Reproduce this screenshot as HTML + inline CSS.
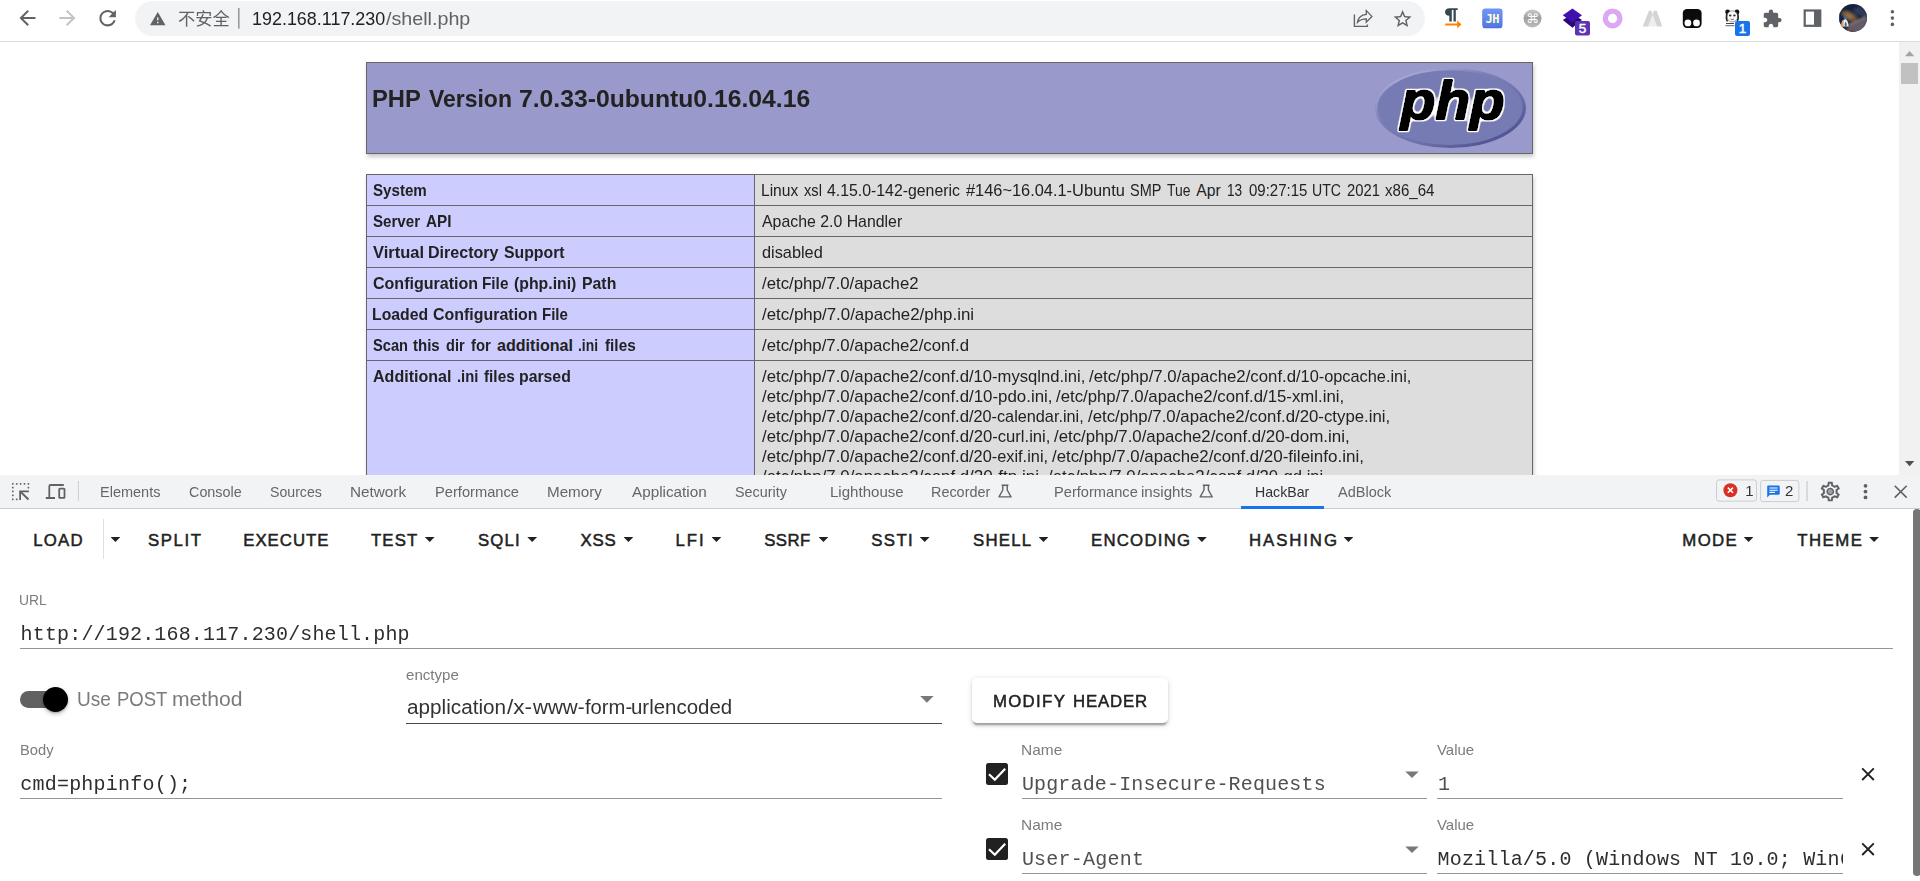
<!DOCTYPE html>
<html lang="zh-CN">
<head>
<meta charset="utf-8">
<title>phpinfo()</title>
<style>
html,body{margin:0;padding:0;}
html{overflow:hidden;}
body{width:1920px;height:881px;overflow:hidden;position:relative;background:#fff;font-family:"Liberation Sans","Noto Sans CJK SC",sans-serif;}
.t{position:absolute;white-space:pre;margin:0;padding:0;transform-origin:0 0;}
.abs{position:absolute;}
.gl{will-change:transform;}
#page{position:absolute;left:0;top:0;width:1899px;height:475px;overflow:hidden;background:#fff;}
#top{position:absolute;left:0;top:0;width:1920px;height:41px;background:#fff;border-bottom:1px solid #dadce0;z-index:5;}
#omni{position:absolute;left:135px;top:1px;width:1290px;height:35px;border-radius:18px;background:#f1f3f4;}
#vsb{position:absolute;left:1899px;top:42px;width:21px;height:433px;background:#f1f1f1;}
#dev{position:absolute;left:0;top:475px;width:1920px;height:33px;background:#f1f3f4;border-bottom:1px solid #cacdd1;}
#hb{position:absolute;left:0;top:509px;width:1920px;height:372px;background:#fff;overflow:hidden;}
.cell{position:absolute;box-sizing:border-box;border:1px solid #666;}
.th{background:#ccf;}
.td{background:#ddd;}
.ul{position:absolute;height:1px;background:#949494;}
.caret{position:absolute;width:9.8px;height:4.9px;background:#212121;clip-path:polygon(0 0,100% 0,50% 100%);}
.sel{position:absolute;width:13.4px;height:6.6px;background:#787878;clip-path:polygon(0 0,100% 0,50% 100%);}
.cb{position:absolute;width:22.4px;height:22.4px;border-radius:2.5px;background:#212121;}
</style>
</head>
<body>

<!-- ================= PHP page ================= -->
<div id="page">
  <div class="abs" style="left:366px;top:62px;width:1167px;height:92px;box-sizing:border-box;border:1px solid #666;background:#99c;box-shadow:1.25px 2.5px 3.75px #ccc;"></div>
  <svg class="abs" style="left:1365px;top:62px;" width="170" height="92" viewBox="1365 62 170 92">
    <defs>
      <linearGradient id="pg" x1="0.15" y1="0.1" x2="0.85" y2="0.9">
        <stop offset="0" stop-color="#a9abd6"/><stop offset="0.35" stop-color="#7a7eb6"/><stop offset="0.65" stop-color="#6f73ad"/><stop offset="1" stop-color="#4f5293"/>
      </linearGradient>
      <filter id="ol" x="-5%" y="-10%" width="110%" height="120%">
        <feMorphology in="SourceAlpha" operator="dilate" radius="2" result="d"/>
        <feGaussianBlur in="d" stdDeviation="0.8" result="db"/>
        <feComponentTransfer in="db" result="dt"><feFuncA type="linear" slope="3" intercept="-1.75"/></feComponentTransfer>
        <feFlood flood-color="#fff" result="w"/>
        <feComposite in="w" in2="dt" operator="in" result="o"/>
        <feMerge><feMergeNode in="o"/><feMergeNode in="SourceGraphic"/></feMerge>
      </filter>
    </defs>
    <ellipse cx="1450.5" cy="108" rx="75.5" ry="40" fill="url(#pg)"/>
    <ellipse cx="1450" cy="107.6" rx="72.5" ry="37.4" fill="#777bb3"/>
    <text x="1400.8" y="119.3" textLength="104" lengthAdjust="spacingAndGlyphs" font-family="'Liberation Sans', sans-serif" font-weight="700" font-style="italic" font-size="54" fill="#000" stroke="#000" stroke-width="1.9" stroke-linejoin="round" filter="url(#ol)">php</text>
  </svg>
  <!-- table cells -->
  <div id="tbl" class="abs" style="left:366px;top:174px;width:1167px;height:340px;box-shadow:1.25px 2.5px 3.75px #ccc;"></div>
  <div class="cell th" style="left:366px;top:174px;width:389px;height:32px;"></div><div class="cell td" style="left:754px;top:174px;width:779px;height:32px;"></div>
<div class="cell th" style="left:366px;top:205px;width:389px;height:32px;"></div><div class="cell td" style="left:754px;top:205px;width:779px;height:32px;"></div>
<div class="cell th" style="left:366px;top:236px;width:389px;height:32px;"></div><div class="cell td" style="left:754px;top:236px;width:779px;height:32px;"></div>
<div class="cell th" style="left:366px;top:267px;width:389px;height:32px;"></div><div class="cell td" style="left:754px;top:267px;width:779px;height:32px;"></div>
<div class="cell th" style="left:366px;top:298px;width:389px;height:32px;"></div><div class="cell td" style="left:754px;top:298px;width:779px;height:32px;"></div>
<div class="cell th" style="left:366px;top:329px;width:389px;height:32px;"></div><div class="cell td" style="left:754px;top:329px;width:779px;height:32px;"></div>
<div class="cell th" style="left:366px;top:360px;width:389px;height:181px;"></div><div class="cell td" style="left:754px;top:360px;width:779px;height:181px;"></div>
<span class="t" style="left:372.28px;top:82.50px;font:normal 700 24.5px/32px 'Liberation Sans', sans-serif;color:#222;transform:scaleX(0.9687);">PHP </span><span class="t" style="left:429.25px;top:82.50px;font:normal 700 24.5px/32px 'Liberation Sans', sans-serif;color:#222;transform:scaleX(0.9366);">Version </span><span class="t" style="left:518.99px;top:82.50px;font:normal 700 24.5px/32px 'Liberation Sans', sans-serif;color:#222;transform:scaleX(1.0085);">7.0.33-0ubuntu0.16.04.16</span>
<span class="t" style="left:373.25px;top:179.50px;font:normal 700 16.1px/21px 'Liberation Sans', sans-serif;color:#222;transform:scaleX(0.9395);">System</span>
<span class="t" style="left:373.25px;top:210.50px;font:normal 700 16.1px/21px 'Liberation Sans', sans-serif;color:#222;transform:scaleX(0.9391);">Server </span><span class="t" style="left:426.25px;top:210.50px;font:normal 700 16.1px/21px 'Liberation Sans', sans-serif;color:#222;transform:scaleX(0.9485);">API</span>
<span class="t" style="left:373.25px;top:241.50px;font:normal 700 16.1px/21px 'Liberation Sans', sans-serif;color:#222;transform:scaleX(1.0240);">Virtual </span><span class="t" style="left:428.25px;top:241.50px;font:normal 700 16.1px/21px 'Liberation Sans', sans-serif;color:#222;transform:scaleX(0.9970);">Directory </span><span class="t" style="left:503.80px;top:241.50px;font:normal 700 16.1px/21px 'Liberation Sans', sans-serif;color:#222;transform:scaleX(0.9820);">Support</span>
<span class="t" style="left:373.25px;top:272.50px;font:normal 700 16.1px/21px 'Liberation Sans', sans-serif;color:#222;transform:scaleX(0.9962);">Configuration </span><span class="t" style="left:482.30px;top:272.50px;font:normal 700 16.1px/21px 'Liberation Sans', sans-serif;color:#222;transform:scaleX(0.9524);">File </span><span class="t" style="left:514.25px;top:272.50px;font:normal 700 16.1px/21px 'Liberation Sans', sans-serif;color:#222;transform:scaleX(0.9826);">(php.ini) </span><span class="t" style="left:581.52px;top:272.50px;font:normal 700 16.1px/21px 'Liberation Sans', sans-serif;color:#222;transform:scaleX(0.9835);">Path</span>
<span class="t" style="left:372.27px;top:303.50px;font:normal 700 16.1px/21px 'Liberation Sans', sans-serif;color:#222;transform:scaleX(0.9794);">Loaded </span><span class="t" style="left:433.25px;top:303.50px;font:normal 700 16.1px/21px 'Liberation Sans', sans-serif;color:#222;transform:scaleX(0.9914);">Configuration </span><span class="t" style="left:542.07px;top:303.50px;font:normal 700 16.1px/21px 'Liberation Sans', sans-serif;color:#222;transform:scaleX(0.9338);">File</span>
<span class="t" style="left:373.25px;top:334.50px;font:normal 700 16.1px/21px 'Liberation Sans', sans-serif;color:#222;transform:scaleX(0.9100);">Scan </span><span class="t" style="left:413.25px;top:334.50px;font:normal 700 16.1px/21px 'Liberation Sans', sans-serif;color:#222;transform:scaleX(0.9333);">this </span><span class="t" style="left:445.75px;top:334.50px;font:normal 700 16.1px/21px 'Liberation Sans', sans-serif;color:#222;transform:scaleX(0.9037);">dir </span><span class="t" style="left:470.75px;top:334.50px;font:normal 700 16.1px/21px 'Liberation Sans', sans-serif;color:#222;transform:scaleX(0.9238);">for </span><span class="t" style="left:497.00px;top:334.50px;font:normal 700 16.1px/21px 'Liberation Sans', sans-serif;color:#222;">additional </span><span class="t" style="left:577.89px;top:334.50px;font:normal 700 16.1px/21px 'Liberation Sans', sans-serif;color:#222;transform:scaleX(0.8611);">.ini </span><span class="t" style="left:605.00px;top:334.50px;font:normal 700 16.1px/21px 'Liberation Sans', sans-serif;color:#222;transform:scaleX(0.9534);">files</span>
<span class="t" style="left:373.25px;top:365.50px;font:normal 700 16.1px/21px 'Liberation Sans', sans-serif;color:#222;transform:scaleX(0.9975);">Additional </span><span class="t" style="left:456.58px;top:365.50px;font:normal 700 16.1px/21px 'Liberation Sans', sans-serif;color:#222;transform:scaleX(0.9186);">.ini </span><span class="t" style="left:484.25px;top:365.50px;font:normal 700 16.1px/21px 'Liberation Sans', sans-serif;color:#222;transform:scaleX(0.9534);">files </span><span class="t" style="left:519.02px;top:365.50px;font:normal 700 16.1px/21px 'Liberation Sans', sans-serif;color:#222;transform:scaleX(0.9814);">parsed</span>
<span class="t" style="left:761.11px;top:180.00px;font:normal 400 15.7px/21px 'Liberation Sans', sans-serif;color:#222;transform:scaleX(0.9929);">Linux </span><span class="t" style="left:804.10px;top:180.00px;font:normal 400 15.7px/21px 'Liberation Sans', sans-serif;color:#222;transform:scaleX(0.9365);">xsl </span><span class="t" style="left:827.20px;top:180.00px;font:normal 400 15.7px/21px 'Liberation Sans', sans-serif;color:#222;transform:scaleX(1.0095);">4.15.0-142-generic </span><span class="t" style="left:965.90px;top:180.00px;font:normal 400 15.7px/21px 'Liberation Sans', sans-serif;color:#222;transform:scaleX(1.0437);">#146~16.04.1-Ubuntu </span><span class="t" style="left:1130.00px;top:180.00px;font:normal 400 15.7px/21px 'Liberation Sans', sans-serif;color:#222;transform:scaleX(0.9215);">SMP </span><span class="t" style="left:1166.90px;top:180.00px;font:normal 400 15.7px/21px 'Liberation Sans', sans-serif;color:#222;transform:scaleX(0.8868);">Tue </span><span class="t" style="left:1196.20px;top:180.00px;font:normal 400 15.7px/21px 'Liberation Sans', sans-serif;color:#222;">Apr </span><span class="t" style="left:1226.63px;top:180.00px;font:normal 400 15.7px/21px 'Liberation Sans', sans-serif;color:#222;transform:scaleX(0.8730);">13 </span><span class="t" style="left:1248.50px;top:180.00px;font:normal 400 15.7px/21px 'Liberation Sans', sans-serif;color:#222;transform:scaleX(0.9570);">09:27:15 </span><span class="t" style="left:1312.30px;top:180.00px;font:normal 400 15.7px/21px 'Liberation Sans', sans-serif;color:#222;transform:scaleX(0.8993);">UTC </span><span class="t" style="left:1346.60px;top:180.00px;font:normal 400 15.7px/21px 'Liberation Sans', sans-serif;color:#222;transform:scaleX(0.9422);">2021 </span><span class="t" style="left:1385.00px;top:180.00px;font:normal 400 15.7px/21px 'Liberation Sans', sans-serif;color:#222;transform:scaleX(0.9605);">x86_64</span>
<span class="t" style="left:761.75px;top:211.00px;font:normal 400 15.7px/21px 'Liberation Sans', sans-serif;color:#222;transform:scaleX(1.0112);">Apache 2.0 Handler</span>
<span class="t" style="left:761.75px;top:242.00px;font:normal 400 15.7px/21px 'Liberation Sans', sans-serif;color:#222;transform:scaleX(1.0396);">disabled</span>
<span class="t" style="left:761.75px;top:273.00px;font:normal 400 15.7px/21px 'Liberation Sans', sans-serif;color:#222;transform:scaleX(1.0682);">/etc/php/7.0/apache2</span>
<span class="t" style="left:761.75px;top:304.00px;font:normal 400 15.7px/21px 'Liberation Sans', sans-serif;color:#222;transform:scaleX(1.0756);">/etc/php/7.0/apache2/php.ini</span>
<span class="t" style="left:761.75px;top:335.00px;font:normal 400 15.7px/21px 'Liberation Sans', sans-serif;color:#222;transform:scaleX(1.0692);">/etc/php/7.0/apache2/conf.d</span>
<span class="t" style="left:761.75px;top:366.00px;font:normal 400 15.7px/21px 'Liberation Sans', sans-serif;color:#222;transform:scaleX(1.0692);">/etc/php/7.0/apache2/conf.d</span><span class="t" style="left:968.60px;top:366.00px;font:normal 400 15.7px/21px 'Liberation Sans', sans-serif;color:#222;transform:scaleX(1.0581);">/10-mysqlnd.ini, </span><span class="t" style="left:1089.20px;top:366.00px;font:normal 400 15.7px/21px 'Liberation Sans', sans-serif;color:#222;transform:scaleX(1.0692);">/etc/php/7.0/apache2/conf.d</span><span class="t" style="left:1296.05px;top:366.00px;font:normal 400 15.7px/21px 'Liberation Sans', sans-serif;color:#222;transform:scaleX(1.0416);">/10-opcache.ini, </span><span class="t" style="left:761.75px;top:386.00px;font:normal 400 15.7px/21px 'Liberation Sans', sans-serif;color:#222;transform:scaleX(1.0692);">/etc/php/7.0/apache2/conf.d</span><span class="t" style="left:968.60px;top:386.00px;font:normal 400 15.7px/21px 'Liberation Sans', sans-serif;color:#222;transform:scaleX(1.0753);">/10-pdo.ini, </span><span class="t" style="left:1056.40px;top:386.00px;font:normal 400 15.7px/21px 'Liberation Sans', sans-serif;color:#222;transform:scaleX(1.0692);">/etc/php/7.0/apache2/conf.d</span><span class="t" style="left:1263.25px;top:386.00px;font:normal 400 15.7px/21px 'Liberation Sans', sans-serif;color:#222;transform:scaleX(1.0694);">/15-xml.ini, </span><span class="t" style="left:761.75px;top:406.00px;font:normal 400 15.7px/21px 'Liberation Sans', sans-serif;color:#222;transform:scaleX(1.0692);">/etc/php/7.0/apache2/conf.d</span><span class="t" style="left:968.60px;top:406.00px;font:normal 400 15.7px/21px 'Liberation Sans', sans-serif;color:#222;transform:scaleX(1.0357);">/20-calendar.ini, </span><span class="t" style="left:1087.70px;top:406.00px;font:normal 400 15.7px/21px 'Liberation Sans', sans-serif;color:#222;transform:scaleX(1.0692);">/etc/php/7.0/apache2/conf.d</span><span class="t" style="left:1294.55px;top:406.00px;font:normal 400 15.7px/21px 'Liberation Sans', sans-serif;color:#222;transform:scaleX(1.0704);">/20-ctype.ini, </span><span class="t" style="left:761.75px;top:426.00px;font:normal 400 15.7px/21px 'Liberation Sans', sans-serif;color:#222;transform:scaleX(1.0692);">/etc/php/7.0/apache2/conf.d</span><span class="t" style="left:968.60px;top:426.00px;font:normal 400 15.7px/21px 'Liberation Sans', sans-serif;color:#222;transform:scaleX(1.0615);">/20-curl.ini, </span><span class="t" style="left:1054.40px;top:426.00px;font:normal 400 15.7px/21px 'Liberation Sans', sans-serif;color:#222;transform:scaleX(1.0692);">/etc/php/7.0/apache2/conf.d</span><span class="t" style="left:1261.25px;top:426.00px;font:normal 400 15.7px/21px 'Liberation Sans', sans-serif;color:#222;transform:scaleX(1.0825);">/20-dom.ini, </span><span class="t" style="left:761.75px;top:446.00px;font:normal 400 15.7px/21px 'Liberation Sans', sans-serif;color:#222;transform:scaleX(1.0692);">/etc/php/7.0/apache2/conf.d</span><span class="t" style="left:968.60px;top:446.00px;font:normal 400 15.7px/21px 'Liberation Sans', sans-serif;color:#222;transform:scaleX(1.0423);">/20-exif.ini, </span><span class="t" style="left:1052.20px;top:446.00px;font:normal 400 15.7px/21px 'Liberation Sans', sans-serif;color:#222;transform:scaleX(1.0692);">/etc/php/7.0/apache2/conf.d</span><span class="t" style="left:1259.05px;top:446.00px;font:normal 400 15.7px/21px 'Liberation Sans', sans-serif;color:#222;transform:scaleX(1.0851);">/20-fileinfo.ini, </span><span class="t" style="left:761.75px;top:466.00px;font:normal 400 15.7px/21px 'Liberation Sans', sans-serif;color:#222;transform:scaleX(1.0692);">/etc/php/7.0/apache2/conf.d</span><span class="t" style="left:968.60px;top:466.00px;font:normal 400 15.7px/21px 'Liberation Sans', sans-serif;color:#222;transform:scaleX(1.0855);">/20-ftp.ini, </span><span class="t" style="left:1047.70px;top:466.00px;font:normal 400 15.7px/21px 'Liberation Sans', sans-serif;color:#222;transform:scaleX(1.0692);">/etc/php/7.0/apache2/conf.d</span><span class="t" style="left:1254.55px;top:466.00px;font:normal 400 15.7px/21px 'Liberation Sans', sans-serif;color:#222;transform:scaleX(1.0580);">/20-gd.ini,</span>
</div>
<div id="vsb">
  <svg class="abs" style="left:0;top:0" width="21" height="433" viewBox="0 0 21 433">
    <path d="M6 14.2 L10.6 9 L15.3 14.2 Z" fill="#a3a3a3"/>
    <rect x="2" y="21" width="17" height="21" fill="#c1c1c1"/>
    <path d="M6 419 L15.3 419 L10.6 424.2 Z" fill="#505050"/>
  </svg>
</div>

<!-- ================= Browser toolbar ================= -->
<div id="top">
  <div id="omni"></div>
  <svg class="abs" style="left:0;top:0" width="1920" height="42" viewBox="0 0 1920 42">
  <defs>
    <linearGradient id="jh" x1="0" y1="0" x2="0" y2="1"><stop offset="0" stop-color="#7096f6"/><stop offset="1" stop-color="#4f78e6"/></linearGradient>
    <linearGradient id="cmd" x1="0" y1="0" x2="0" y2="1"><stop offset="0" stop-color="#c9c9c9"/><stop offset="0.5" stop-color="#9e9e9e"/><stop offset="1" stop-color="#bdbdbd"/></linearGradient>
    <radialGradient id="av" cx="0.45" cy="0.62" r="0.6"><stop offset="0" stop-color="#e9b56a"/><stop offset="0.25" stop-color="#a9703c"/><stop offset="0.6" stop-color="#3b3f5a"/><stop offset="1" stop-color="#16223f"/></radialGradient>
    <filter id="avb" x="-20%" y="-20%" width="140%" height="140%"><feGaussianBlur stdDeviation="0.9"/></filter>
    <clipPath id="avc"><circle cx="1853" cy="17.9" r="14"/></clipPath>
    <radialGradient id="avg" cx="0.4" cy="0.5" r="0.6"><stop offset="0" stop-color="#a9803f"/><stop offset="0.5" stop-color="#7e5f3a" stop-opacity="0.85"/><stop offset="1" stop-color="#4a4458" stop-opacity="0"/></radialGradient>
  </defs>
  <!-- nav -->
  <path transform="translate(15.5,6)" d="M20 11H7.83l5.59-5.59L12 4l-8 8 8 8 1.41-1.41L7.83 13H20v-2z" fill="#5f6368"/>
  <path transform="translate(55.4,6)" d="M12 4l-1.41 1.41L16.17 11H4v2h12.17l-5.58 5.59L12 20l8-8z" fill="#c0c4c9"/>
  <path transform="translate(95.3,5.8) scale(1.03)" d="M17.65 6.35C16.2 4.9 14.21 4 12 4c-4.42 0-7.99 3.58-7.99 8s3.57 8 7.99 8c3.73 0 6.84-2.55 7.73-6h-2.08c-.82 2.33-3.04 4-5.65 4-3.31 0-6-2.69-6-6s2.69-6 6-6c1.66 0 3.14.69 4.22 1.78L13 11h7V4l-2.35 2.35z" fill="#5f6368"/>
  <!-- not secure -->
  <path transform="translate(149.3,10.5) scale(0.705)" d="M1 21h22L12 2 1 21zm12-3h-2v-2h2v2zm0-4h-2v-4h2v4z" fill="#5f6368"/>
  <rect x="238.1" y="8" width="1.4" height="20.7" fill="#8a8f94"/>
  <!-- share -->
  <g fill="none" stroke="#5f6368" stroke-width="1.35" stroke-linejoin="miter">
    <path d="M1354.4 14.4 V26.3 H1367.4 V24.4"/>
    <path d="M1357.5 22.3 C1358.2 17.6 1361.4 14.7 1366.3 14.3 V10.6 L1371.9 16.4 L1366.3 22.2 V18.8 C1362.6 18.8 1359.8 19.9 1357.5 22.3 Z"/>
  </g>
  <!-- star -->
  <path transform="translate(1391.8,8.2) scale(0.9)" d="M22 9.24l-7.19-.62L12 2 9.19 8.63 2 9.24l5.46 4.73L5.82 21 12 17.27 18.18 21l-1.63-7.03L22 9.24zM12 15.4l-3.76 2.27 1-4.28-3.32-2.88 4.38-.38L12 6.1l1.71 4.04 4.38.38-3.32 2.88 1 4.28L12 15.4z" fill="#5f6368"/>
  <!-- pilcrow ext -->
  <path d="M1449.6 8.3 H1457.7 V10 H1455.8 V21.6 H1453.5 V10 H1451.8 V21.6 H1449.3 V15.8 C1446.6 15.8 1445 14.2 1445 12 C1445 9.8 1446.8 8.3 1449.6 8.3 Z" fill="#37474f"/>
  <path d="M1445.2 23.5 H1457.2 V20.6 L1461.5 24.4 L1457.2 28.2 V25.4 H1445.2 Z" fill="#ff8000"/>
  <!-- JH -->
  <rect x="1482.5" y="8.7" width="19.8" height="19.6" rx="2.4" fill="#4a64d4"/>
  <rect x="1482.5" y="8.7" width="19.8" height="18.8" rx="2.4" fill="url(#jh)"/>
  <text x="1492.2" y="23.3" text-anchor="middle" font-family="'DejaVu Sans Mono','Liberation Mono',monospace" font-weight="700" font-size="12" fill="#ffffd2" letter-spacing="-0.5">JH</text>
  <!-- cmd -->
  <circle cx="1532.5" cy="18.4" r="9" fill="url(#cmd)"/>
  <text x="1532.5" y="23" text-anchor="middle" font-family="'DejaVu Sans',sans-serif" font-size="13" fill="#fff">⌘</text>
  <!-- purple stack -->
  <path d="M1562.8 20 L1572.4 14 L1582 20 L1572.4 27.8 Z" fill="#2a0a78"/>
  <path d="M1562.8 15.2 L1572.4 8.6 L1582 15.2 L1572.4 22.4 Z" fill="#4310b0"/>
  <rect x="1575" y="21" width="15" height="14.6" rx="2" fill="#5e35b1"/>
  <text x="1582.5" y="33" text-anchor="middle" font-family="'Liberation Sans',sans-serif" font-weight="400" font-size="13.5" fill="#fff" stroke="#fff" stroke-width="0.45">5</text>
  <!-- pink ring -->
  <circle cx="1612.6" cy="18.4" r="7.3" fill="none" stroke="#dca8f4" stroke-width="5.4"/>
  <!-- lambda -->
  <path d="M1648.2 26.6 L1652.7 14.5 L1657 26.6 Z" fill="#eeeeee"/>
  <path d="M1642.7 26.6 L1648.9 10.7 H1651.4 L1652.7 14.5 L1648.2 26.6 Z" fill="#d4d4d4"/>
  <path d="M1652.7 14.5 L1653.9 10.7 H1656.8 L1662.3 26.6 H1657 Z" fill="#d4d4d4"/>
  <!-- tampermonkey -->
  <rect x="1682.8" y="9" width="18.8" height="19" rx="4.2" fill="#0b0b0b"/>
  <circle cx="1687.9" cy="22.9" r="3.4" fill="#fff"/><circle cx="1696.5" cy="22.9" r="3.4" fill="#fff"/>
  <!-- panda -->
  <g>
    <circle cx="1727.6" cy="12" r="2.4" fill="#111"/><circle cx="1737" cy="12" r="2.4" fill="#111"/>
    <ellipse cx="1732.3" cy="16.4" rx="5.4" ry="5.6" fill="#fafafa" stroke="#555" stroke-width="0.6"/>
    <ellipse cx="1730.2" cy="15.4" rx="1.3" ry="1" fill="#333"/><ellipse cx="1734.4" cy="15.4" rx="1.3" ry="1" fill="#333"/>
    <path d="M1730.6 19 Q1732.3 20.2 1734 19" stroke="#333" stroke-width="0.7" fill="none"/>
    <rect x="1726" y="23" width="8" height="1" fill="#444"/><rect x="1725.4" y="25.2" width="9" height="1" fill="#666"/>
    <path d="M1726 13.5 Q1725 18 1726.4 21.6 L1728 21.6 Q1726.6 17.6 1727.4 14 Z" fill="#222"/>
    <path d="M1738.6 13.5 Q1739.6 18 1738.2 21.6 L1736.6 21.6 Q1738 17.6 1737.2 14 Z" fill="#222"/>
  </g>
  <rect x="1735" y="21" width="15" height="15" rx="2" fill="#1a73e8"/>
  <text x="1742.5" y="33.2" text-anchor="middle" font-family="'Liberation Sans',sans-serif" font-weight="400" font-size="13.5" fill="#fff" stroke="#fff" stroke-width="0.45">1</text>
  <!-- puzzle -->
  <path transform="translate(1762.05,8.55) scale(0.85)" d="M20.5 11H19V7c0-1.1-.9-2-2-2h-4V3.5C13 2.12 11.88 1 10.5 1S8 2.12 8 3.5V5H4c-1.1 0-1.99.9-1.99 2v3.8H3.5c1.49 0 2.7 1.21 2.7 2.7s-1.21 2.7-2.7 2.7H2V20c0 1.1.9 2 2 2h3.8v-1.5c0-1.49 1.21-2.7 2.7-2.7 1.49 0 2.7 1.21 2.7 2.7V22H17c1.1 0 2-.9 2-2v-4h1.5c1.38 0 2.5-1.12 2.5-2.5S21.88 11 20.5 11z" fill="#5f6368"/>
  <!-- side panel -->
  <rect x="1804.7" y="10.5" width="15.4" height="15.3" fill="none" stroke="#5f6368" stroke-width="2.2"/>
  <rect x="1814" y="10" width="7.2" height="16.4" fill="#5f6368"/>
  <!-- avatar -->
  <circle cx="1853" cy="17.9" r="14" fill="#13203f"/>
  <g clip-path="url(#avc)">
    <g filter="url(#avb)"><ellipse cx="1851" cy="17" rx="11" ry="5.4" transform="rotate(28 1851 17)" fill="url(#avg)"/>
    <path d="M1853 9 L1860 6.5 L1868 13 L1868 18 L1856 14 Z" fill="#3a4260" opacity="0.8"/>
    <path d="M1846 33 L1849 24 L1866 16 L1868 20 L1868 33 Z" fill="#6b6270" opacity="0.9"/>
    <path d="M1848 24.5 L1865 16.5 L1865.6 17.8 L1848.6 25.8 Z" fill="#9c8468" opacity="0.9"/>
    <path d="M1840 26 Q1846 31 1856 30 L1852 34 L1838 34 Z" fill="#6d4a26" opacity="0.9"/></g>
    <path d="M1841.6 26.6 Q1841.4 20.4 1845.4 19 Q1848.4 20.6 1848.6 26.6 Z" fill="#f4efe6"/>
    <path d="M1841.4 26 Q1841 21 1843.4 19.6 L1843.8 26.4 Z" fill="#e8a35a"/>
    <path d="M1844.6 24 L1845.6 21.6 L1846.8 24 L1846.4 26.4 L1844.8 26.4 Z" fill="#3b6a9a"/>
    <ellipse cx="1845.4" cy="17.8" rx="1.6" ry="1.1" fill="#2f72d2"/>
    <path d="M1839 12 Q1841 17 1840 22 L1838 22 L1838 12 Z" fill="#24508a" opacity="0.7"/>
  </g>
  <!-- menu -->
  <circle cx="1892.4" cy="11.8" r="1.8" fill="#5f6368"/><circle cx="1892.4" cy="18.1" r="1.8" fill="#5f6368"/><circle cx="1892.4" cy="24.4" r="1.8" fill="#5f6368"/>
</svg>

<span class="t" style="left:177.80px;top:7.50px;font:normal 400 17.5px/23px 'Liberation Sans', 'Noto Sans CJK SC', sans-serif;color:#5f6368;transform:scaleX(0.9830);">不安全</span>
<span class="t" style="left:252.03px;top:6.00px;font:normal 400 18.5px/25px 'Liberation Sans', sans-serif;color:#202124;transform:scaleX(0.9690);">192.168.117.230</span><span class="t" style="left:386.00px;top:6.00px;font:normal 400 18.5px/25px 'Liberation Sans', sans-serif;color:#5f6368;transform:scaleX(1.0646);">/shell.php</span>
</div>

<!-- ================= DevTools tab bar ================= -->
<div id="dev"></div>
<div class="abs" style="left:1241px;top:506px;width:83px;height:2.5px;background:#1a73e8;"></div>
<svg class="abs" style="left:0;top:475px" width="1920" height="34" viewBox="0 475 1920 34">
  <!-- inspect -->
  <g fill="#5f6368"><rect x="11.95" y="483.05" width="1.7" height="1.7" rx="0.4"/><rect x="15.85" y="483.05" width="1.7" height="1.7" rx="0.4"/><rect x="19.75" y="483.05" width="1.7" height="1.7" rx="0.4"/><rect x="23.65" y="483.05" width="1.7" height="1.7" rx="0.4"/><rect x="27.55" y="483.05" width="1.7" height="1.7" rx="0.4"/><rect x="11.95" y="486.75" width="1.7" height="1.7" rx="0.4"/><rect x="11.95" y="490.55" width="1.7" height="1.7" rx="0.4"/><rect x="11.95" y="494.55" width="1.7" height="1.7" rx="0.4"/><rect x="11.95" y="498.45" width="1.7" height="1.7" rx="0.4"/><rect x="27.55" y="486.75" width="1.7" height="1.7" rx="0.4"/><rect x="15.85" y="498.45" width="1.7" height="1.7" rx="0.4"/></g>
  <g fill="none" stroke="#5f6368" stroke-width="1.8">
    <path d="M28.9 491.3 H20.1 V499.9"/>
    <path d="M20.4 491.6 L28.5 499.5" stroke-width="2"/>
  </g>
  <!-- device -->
  <g fill="none" stroke="#5f6368" stroke-width="1.8">
    <path d="M63.8 485 H50.6 Q49.3 485 49.3 486.3 V497.2"/>
    <path d="M45.8 498 H55" stroke-width="2"/>
    <rect x="59.2" y="488.7" width="5.3" height="9.1" rx="0.6"/>
  </g>
  <rect x="77.9" y="481" width="1" height="19.8" fill="#cacdd1"/>
  <!-- flasks -->
  <g fill="none" stroke="#5f6368" stroke-width="1.4" stroke-linejoin="round">
    <path d="M1001.6 485.3 H1008.4 M1002.8 485.3 V490 L999 496.9 H1011 L1007.2 490 V485.3"/>
    <path d="M1202.8 485.3 H1209.6 M1204 485.3 V490 L1200.2 496.9 H1212.2 L1208.4 490 V485.3"/>
  </g>
  <!-- badges -->
  <rect x="1716.5" y="479.9" width="40" height="21.2" rx="2.5" fill="#f1f3f4" stroke="#cacdd1" stroke-width="1"/>
  <circle cx="1730.4" cy="490.2" r="7" fill="#d93025"/>
  <path d="M1727.8 487.6 L1733 492.8 M1733 487.6 L1727.8 492.8" stroke="#fff" stroke-width="1.5" fill="none"/>
  <rect x="1760.6" y="480.4" width="38.2" height="21.2" rx="2.5" fill="#f1f3f4" stroke="#cacdd1" stroke-width="1"/>
  <path d="M1768.4 485.6 H1778.6 Q1779.7 485.6 1779.7 486.8 V493.6 Q1779.7 494.8 1778.6 494.8 H1769.9 L1767.2 497.5 V486.8 Q1767.2 485.6 1768.4 485.6 Z" fill="#1a73e8"/>
  <path d="M1769.4 488 H1777.6 M1769.4 490.2 H1777.6 M1769.4 492.4 H1775" stroke="#fff" stroke-width="1.1" fill="none"/>
  <rect x="1806.4" y="481" width="1.3" height="20" fill="#cacdd1"/>
  <!-- gear -->
  <path transform="translate(1818.5,479.8) scale(0.98)" d="M19.43 12.98c.04-.32.07-.64.07-.98s-.03-.66-.07-.98l2.11-1.65c.19-.15.24-.42.12-.64l-2-3.46c-.12-.22-.39-.3-.61-.22l-2.49 1c-.52-.4-1.08-.73-1.69-.98l-.38-2.65C14.46 2.18 14.25 2 14 2h-4c-.25 0-.46.18-.49.42l-.38 2.65c-.61.25-1.17.59-1.69.98l-2.49-1c-.23-.09-.49 0-.61.22l-2 3.46c-.13.22-.07.49.12.64l2.11 1.65c-.04.32-.07.65-.07.98s.03.66.07.98l-2.11 1.65c-.19.15-.24.42-.12.64l2 3.46c.12.22.39.3.61.22l2.49-1c.52.4 1.08.73 1.69.98l.38 2.65c.03.24.24.42.49.42h4c.25 0 .46-.18.49-.42l.38-2.65c.61-.25 1.17-.59 1.69-.98l2.49 1c.23.09.49 0 .61-.22l2-3.46c.12-.22.07-.49-.12-.64l-2.11-1.65zm-1.98-1.71c.04.31.05.52.05.73 0 .21-.02.43-.05.73l-.14 1.13.89.7 1.08.84-.7 1.21-1.27-.51-1.04-.42-.9.68c-.43.32-.84.56-1.25.73l-1.06.43-.16 1.13-.2 1.35h-1.4l-.19-1.35-.16-1.13-1.06-.43c-.43-.18-.83-.41-1.23-.71l-.91-.7-1.06.43-1.27.51-.7-1.21 1.08-.84.89-.7-.14-1.13c-.03-.31-.05-.54-.05-.74s.02-.43.05-.73l.14-1.13-.89-.7-1.08-.84.7-1.21 1.27.51 1.04.42.9-.68c.43-.32.84-.56 1.25-.73l1.06-.43.16-1.13.2-1.35h1.39l.19 1.35.16 1.13 1.06.43c.43.18.83.41 1.23.71l.91.7 1.06-.43 1.27-.51.7 1.21-1.07.85-.89.7.14 1.13zM12 8c-2.21 0-4 1.79-4 4s1.79 4 4 4 4-1.79 4-4-1.79-4-4-4zm0 6c-1.1 0-2-.9-2-2s.9-2 2-2 2 .9 2 2-.9 2-2 2z" fill="#5f6368"/>
  <circle cx="1830.3" cy="491.6" r="2.4" fill="#9aa0a6"/>
  <circle cx="1865.5" cy="485.8" r="1.9" fill="#5f6368"/><circle cx="1865.5" cy="491.6" r="1.9" fill="#5f6368"/><circle cx="1865.5" cy="497.4" r="1.9" fill="#5f6368"/>
  <path d="M1894.7 485.8 L1906.7 497.6 M1906.7 485.8 L1894.7 497.6" stroke="#5f6368" stroke-width="1.6" fill="none"/>
</svg>


<!-- ================= HackBar ================= -->
<div id="hb"></div>
<!-- toolbar divider + carets -->
<div class="abs" style="left:103px;top:519px;width:1px;height:40px;background:#e0e0e0;"></div>
<div class="caret" style="left:110.55px;top:537.05px;"></div>
<div class="caret" style="left:424.80px;top:537.05px;"></div>
<div class="caret" style="left:527.30px;top:537.05px;"></div>
<div class="caret" style="left:623.55px;top:537.05px;"></div>
<div class="caret" style="left:711.55px;top:537.05px;"></div>
<div class="caret" style="left:818.55px;top:537.05px;"></div>
<div class="caret" style="left:919.80px;top:537.05px;"></div>
<div class="caret" style="left:1038.60px;top:537.05px;"></div>
<div class="caret" style="left:1197.00px;top:537.05px;"></div>
<div class="caret" style="left:1343.60px;top:537.05px;"></div>
<div class="caret" style="left:1743.70px;top:537.05px;"></div>
<div class="caret" style="left:1869.20px;top:537.05px;"></div>
<!-- URL underline -->
<div class="ul" style="left:20px;top:648px;width:1873px;"></div>
<!-- switch -->
<div class="abs" style="left:20px;top:690.5px;width:45px;height:17.5px;border-radius:9px;background:#616161;"></div>
<div class="abs" style="left:42.5px;top:687px;width:25px;height:25px;border-radius:50%;background:#000;box-shadow:0 2.5px 5px -1px rgba(0,0,0,.2),0 1.25px 1.5px 0 rgba(0,0,0,.14),0 1.25px 4px 0 rgba(0,0,0,.12);"></div>
<!-- enctype select -->
<div class="ul" style="left:406.25px;top:723px;width:535.6px;background:#4a4a4a;"></div>
<div class="sel" style="left:920.2px;top:696.1px;"></div>
<!-- modify header button -->
<div class="abs" style="left:972px;top:678px;width:196px;height:45px;border-radius:5px;background:#fff;box-shadow:0 3.75px 1.25px -2.5px rgba(0,0,0,.2),0 2.5px 2.5px 0 rgba(0,0,0,.14),0 1.25px 6.25px 0 rgba(0,0,0,.12);"></div>
<!-- body underline -->
<div class="ul" style="left:20px;top:798px;width:921.75px;"></div>
<!-- header row 1 -->
<div class="cb" style="left:985.8px;top:762.6px;"><svg width="22.5" height="22.5" viewBox="0 0 22.5 22.5" style="position:absolute;left:0;top:0"><path d="M3 11.2 L8.8 16.7 L19.2 5.8" fill="none" stroke="#fff" stroke-width="2.2"/></svg></div>
<div class="ul" style="left:1022.2px;top:798px;width:404.6px;"></div>
<div class="sel" style="left:1405.3px;top:771.4px;"></div>
<div class="ul" style="left:1437px;top:798px;width:405.7px;"></div>
<svg class="abs" style="left:1860px;top:766px" width="16" height="16" viewBox="0 0 16 16"><path d="M2.2 2.4 L13.8 14 M13.8 2.4 L2.2 14" stroke="#212121" stroke-width="1.9" fill="none"/></svg>
<!-- header row 2 -->
<div class="cb" style="left:985.8px;top:837.6px;"><svg width="22.5" height="22.5" viewBox="0 0 22.5 22.5" style="position:absolute;left:0;top:0"><path d="M3 11.2 L8.8 16.7 L19.2 5.8" fill="none" stroke="#fff" stroke-width="2.2"/></svg></div>
<div class="ul" style="left:1022.2px;top:873px;width:404.6px;"></div>
<div class="sel" style="left:1405.3px;top:846.4px;"></div>
<div class="ul" style="left:1437px;top:873px;width:405.7px;"></div>
<svg class="abs" style="left:1860px;top:841px" width="16" height="16" viewBox="0 0 16 16"><path d="M2.2 2.4 L13.8 14 M13.8 2.4 L2.2 14" stroke="#212121" stroke-width="1.9" fill="none"/></svg>
<!-- devtools panel scrollbar -->
<div class="abs" style="left:1913.1px;top:508.9px;width:7.5px;height:367px;border-radius:3.75px;background:#767676;"></div>

<span class="t" style="left:33.25px;top:529.50px;font:normal 400 16.8px/22px 'Liberation Sans', sans-serif;color:#212121;letter-spacing:1.224px;-webkit-text-stroke:0.5px #212121;">LOAD</span>
<span class="t" style="left:148.00px;top:529.50px;font:normal 400 16.8px/22px 'Liberation Sans', sans-serif;color:#212121;letter-spacing:1.592px;-webkit-text-stroke:0.5px #212121;">SPLIT</span>
<span class="t" style="left:243.25px;top:529.50px;font:normal 400 16.8px/22px 'Liberation Sans', sans-serif;color:#212121;letter-spacing:0.989px;-webkit-text-stroke:0.5px #212121;">EXECUTE</span>
<span class="t" style="left:371.00px;top:529.50px;font:normal 400 16.8px/22px 'Liberation Sans', sans-serif;color:#212121;letter-spacing:1.121px;-webkit-text-stroke:0.5px #212121;">TEST</span>
<span class="t" style="left:478.00px;top:529.50px;font:normal 400 16.8px/22px 'Liberation Sans', sans-serif;color:#212121;letter-spacing:1.140px;-webkit-text-stroke:0.5px #212121;">SQLI</span>
<span class="t" style="left:580.50px;top:529.50px;font:normal 400 16.8px/22px 'Liberation Sans', sans-serif;color:#212121;letter-spacing:0.807px;-webkit-text-stroke:0.5px #212121;">XSS</span>
<span class="t" style="left:675.50px;top:529.50px;font:normal 400 16.8px/22px 'Liberation Sans', sans-serif;color:#212121;letter-spacing:1.958px;-webkit-text-stroke:0.5px #212121;">LFI</span>
<span class="t" style="left:764.25px;top:529.50px;font:normal 400 16.8px/22px 'Liberation Sans', sans-serif;color:#212121;letter-spacing:0.415px;-webkit-text-stroke:0.5px #212121;">SSRF</span>
<span class="t" style="left:871.25px;top:529.50px;font:normal 400 16.8px/22px 'Liberation Sans', sans-serif;color:#212121;letter-spacing:1.371px;-webkit-text-stroke:0.5px #212121;">SSTI</span>
<span class="t" style="left:973.00px;top:529.50px;font:normal 400 16.8px/22px 'Liberation Sans', sans-serif;color:#212121;letter-spacing:1.216px;-webkit-text-stroke:0.5px #212121;">SHELL</span>
<span class="t" style="left:1091.00px;top:529.50px;font:normal 400 16.8px/22px 'Liberation Sans', sans-serif;color:#212121;letter-spacing:1.231px;-webkit-text-stroke:0.5px #212121;">ENCODING</span>
<span class="t" style="left:1249.00px;top:529.50px;font:normal 400 16.8px/22px 'Liberation Sans', sans-serif;color:#212121;letter-spacing:1.916px;-webkit-text-stroke:0.5px #212121;">HASHING</span>
<span class="t" style="left:1682.30px;top:529.50px;font:normal 400 16.8px/22px 'Liberation Sans', sans-serif;color:#212121;letter-spacing:1.350px;-webkit-text-stroke:0.5px #212121;">MODE</span>
<span class="t" style="left:1797.20px;top:529.50px;font:normal 400 16.8px/22px 'Liberation Sans', sans-serif;color:#212121;letter-spacing:1.490px;-webkit-text-stroke:0.5px #212121;">THEME</span>
<div class="abs gl" style="left:0;top:0;width:1920px;height:881px;pointer-events:none;">
<span class="t" style="left:99.73px;top:481.50px;font:normal 400 15px/20px 'Liberation Sans', sans-serif;color:#63666a;transform:scaleX(0.9668);">Elements</span>
<span class="t" style="left:189.30px;top:481.50px;font:normal 400 15px/20px 'Liberation Sans', sans-serif;color:#63666a;transform:scaleX(0.9581);">Console</span>
<span class="t" style="left:270.30px;top:481.50px;font:normal 400 15px/20px 'Liberation Sans', sans-serif;color:#63666a;transform:scaleX(0.9427);">Sources</span>
<span class="t" style="left:349.68px;top:481.50px;font:normal 400 15px/20px 'Liberation Sans', sans-serif;color:#63666a;transform:scaleX(1.0200);">Network</span>
<span class="t" style="left:434.72px;top:481.50px;font:normal 400 15px/20px 'Liberation Sans', sans-serif;color:#63666a;transform:scaleX(0.9772);">Performance</span>
<span class="t" style="left:547.29px;top:481.50px;font:normal 400 15px/20px 'Liberation Sans', sans-serif;color:#63666a;transform:scaleX(1.0136);">Memory</span>
<span class="t" style="left:632.00px;top:481.50px;font:normal 400 15px/20px 'Liberation Sans', sans-serif;color:#63666a;transform:scaleX(1.0173);">Application</span>
<span class="t" style="left:735.30px;top:481.50px;font:normal 400 15px/20px 'Liberation Sans', sans-serif;color:#63666a;transform:scaleX(0.9582);">Security</span>
<span class="t" style="left:829.70px;top:481.50px;font:normal 400 15px/20px 'Liberation Sans', sans-serif;color:#63666a;transform:scaleX(1.0034);">Lighthouse</span>
<span class="t" style="left:931.04px;top:481.50px;font:normal 400 15px/20px 'Liberation Sans', sans-serif;color:#63666a;transform:scaleX(0.9605);">Recorder</span>
<span class="t" style="left:1053.62px;top:481.50px;font:normal 400 15px/20px 'Liberation Sans', sans-serif;color:#63666a;transform:scaleX(0.9760);">Performance </span><span class="t" style="left:1141.09px;top:481.50px;font:normal 400 15px/20px 'Liberation Sans', sans-serif;color:#63666a;transform:scaleX(1.0069);">insights</span>
<span class="t" style="left:1338.00px;top:481.50px;font:normal 400 15px/20px 'Liberation Sans', sans-serif;color:#63666a;transform:scaleX(0.9671);">AdBlock</span>
<span class="t" style="left:1254.76px;top:481.50px;font:normal 400 15px/20px 'Liberation Sans', sans-serif;color:#333;transform:scaleX(0.9430);">HackBar</span>
<span class="t" style="left:1745.20px;top:480.50px;font:normal 400 15px/20px 'Liberation Sans', sans-serif;color:#333;">1</span>
<span class="t" style="left:1785.00px;top:480.50px;font:normal 400 15px/20px 'Liberation Sans', sans-serif;color:#333;">2</span>
<span class="t" style="left:19.08px;top:589.50px;font:normal 400 15px/20px 'Liberation Sans', sans-serif;color:#7c7c7c;transform:scaleX(0.9245);">URL</span>
<span class="t" style="left:20.60px;top:621.50px;font:normal 400 20px/26px 'Liberation Mono', monospace;color:#2e2e2e;letter-spacing:0.159px;">http://192.168.117.230/shell.php</span>
<span class="t" style="left:77.05px;top:686.00px;font:normal 400 20px/26px 'Liberation Sans', sans-serif;color:#7a7a7a;transform:scaleX(0.9508);">Use </span><span class="t" style="left:116.57px;top:686.00px;font:normal 400 20px/26px 'Liberation Sans', sans-serif;color:#7a7a7a;transform:scaleX(0.9251);">POST </span><span class="t" style="left:172.19px;top:686.00px;font:normal 400 20px/26px 'Liberation Sans', sans-serif;color:#7a7a7a;transform:scaleX(1.0567);">method</span>
<span class="t" style="left:406.25px;top:664.50px;font:normal 400 15px/20px 'Liberation Sans', sans-serif;color:#7c7c7c;transform:scaleX(1.0059);">enctype</span>
<span class="t" style="left:407.10px;top:694.00px;font:normal 400 20px/26px 'Liberation Sans', sans-serif;color:#333;transform:scaleX(1.0360);">application</span><span class="t" style="left:506.90px;top:694.00px;font:normal 400 20px/26px 'Liberation Sans', sans-serif;color:#333;transform:scaleX(1.1296);">/x-</span><span class="t" style="left:532.83px;top:694.00px;font:normal 400 20px/26px 'Liberation Sans', sans-serif;color:#333;transform:scaleX(1.0322);">www-</span><span class="t" style="left:584.70px;top:694.00px;font:normal 400 20px/26px 'Liberation Sans', sans-serif;color:#333;transform:scaleX(1.0109);">form-</span><span class="t" style="left:631.48px;top:694.00px;font:normal 400 20px/26px 'Liberation Sans', sans-serif;color:#333;transform:scaleX(1.0223);">urlencoded</span>
<span class="t" style="left:992.90px;top:690.50px;font:normal 400 16.8px/22px 'Liberation Sans', sans-serif;color:#212121;letter-spacing:1.347px;-webkit-text-stroke:0.5px #212121;">MODIFY </span><span class="t" style="left:1073.00px;top:690.50px;font:normal 400 16.8px/22px 'Liberation Sans', sans-serif;color:#212121;letter-spacing:0.837px;-webkit-text-stroke:0.5px #212121;">HEADER</span>
<span class="t" style="left:19.52px;top:739.50px;font:normal 400 15px/20px 'Liberation Sans', sans-serif;color:#7c7c7c;transform:scaleX(0.9795);">Body</span>
<span class="t" style="left:20.25px;top:771.50px;font:normal 400 20px/26px 'Liberation Mono', monospace;color:#2e2e2e;letter-spacing:0.217px;">cmd=phpinfo();</span>
<span class="t" style="left:1021.17px;top:739.50px;font:normal 400 15px/20px 'Liberation Sans', sans-serif;color:#7c7c7c;transform:scaleX(1.0318);">Name</span>
<span class="t" style="left:1437.40px;top:739.50px;font:normal 400 15px/20px 'Liberation Sans', sans-serif;color:#7c7c7c;transform:scaleX(0.9971);">Value</span>
<span class="t" style="left:1021.90px;top:771.50px;font:normal 400 20px/26px 'Liberation Mono', monospace;color:#505050;letter-spacing:0.156px;">Upgrade-Insecure-Requests</span>
<span class="t" style="left:1437.90px;top:771.50px;font:normal 400 20px/26px 'Liberation Mono', monospace;color:#505050;">1</span>
<span class="t" style="left:1021.17px;top:814.50px;font:normal 400 15px/20px 'Liberation Sans', sans-serif;color:#7c7c7c;transform:scaleX(1.0318);">Name</span>
<span class="t" style="left:1437.40px;top:814.50px;font:normal 400 15px/20px 'Liberation Sans', sans-serif;color:#7c7c7c;transform:scaleX(0.9971);">Value</span>
<span class="t" style="left:1021.90px;top:846.50px;font:normal 400 20px/26px 'Liberation Mono', monospace;color:#505050;letter-spacing:0.231px;">User-Agent</span>
</div>
<div class="abs gl" style="left:1437px;top:830px;width:405.7px;height:46px;overflow:hidden;"><div class="abs" style="left:-1437px;top:-830px;width:1920px;height:881px;">
<span class="t" style="left:1437.50px;top:846.50px;font:normal 400 20px/26px 'Liberation Mono', monospace;color:#2e2e2e;letter-spacing:0.186px;">Mozilla/5.0 (Windows NT 10.0; Win64; x64) AppleWebKit/537.36</span>
</div></div>

</body>
</html>
